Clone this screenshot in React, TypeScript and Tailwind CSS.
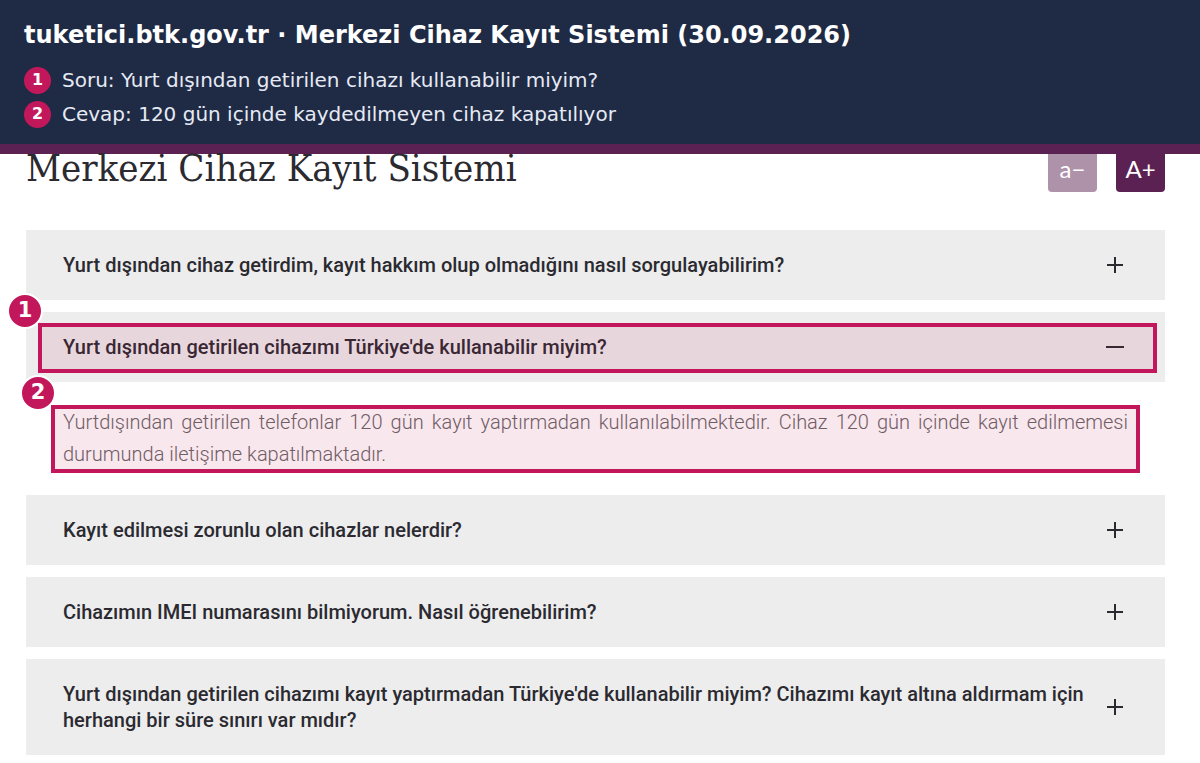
import React, { useState } from "react";

type Faq = {
  question: string;
  answer?: string;
};

const faqs: Faq[] = [
  {
    question:
      "Yurt dışından cihaz getirdim, kayıt hakkım olup olmadığını nasıl sorgulayabilirim?",
  },
  {
    question: "Yurt dışından getirilen cihazımı Türkiye'de kullanabilir miyim?",
    answer:
      "Yurtdışından getirilen telefonlar 120 gün kayıt yaptırmadan kullanılabilmektedir. Cihaz 120 gün içinde kayıt edilmemesi durumunda iletişime kapatılmaktadır.",
  },
  { question: "Kayıt edilmesi zorunlu olan cihazlar nelerdir?" },
  { question: "Cihazımın IMEI numarasını bilmiyorum. Nasıl öğrenebilirim?" },
  {
    question:
      "Yurt dışından getirilen cihazımı kayıt yaptırmadan Türkiye'de kullanabilir miyim? Cihazımı kayıt altına aldırmam için herhangi bir süre sınırı var mıdır?",
  },
];

const notes = [
  "Soru: Yurt dışından getirilen cihazı kullanabilir miyim?",
  "Cevap: 120 gün içinde kaydedilmeyen cihaz kapatılıyor",
];

// Numbered circle that sits on the corner of a highlight frame
const Marker: React.FC<{ label: string }> = ({ label }) => (
  <span className="absolute -left-[35px] -top-[34px] flex size-9 items-center justify-center rounded-full border-2 border-white bg-[#c2185b] font-['DejaVu_Sans'] text-[21px] font-bold text-white">
    {label}
  </span>
);

const ToggleIcon: React.FC<{ open: boolean }> = ({ open }) => (
  <svg
    viewBox="0 0 20 20"
    className="size-5 shrink-0"
    stroke="#2b2a30"
    strokeWidth="2"
    fill="none"
    aria-hidden="true"
  >
    <path d={open ? "M1 10h18" : "M2 10h16M10 2v16"} />
  </svg>
);

const App: React.FC = () => {
  const [openIndex, setOpenIndex] = useState(1);

  return (
    <div className="bg-white font-[Roboto,sans-serif] text-[#2b2a30]">
      {/* Caption */}
      <header className="border-b-10 border-[#5c2153] bg-[#1f2b45] px-6 pt-[19px] pb-4 font-['DejaVu_Sans',sans-serif]">
        <h2 className="text-2xl font-bold text-white">
          tuketici.btk.gov.tr · Merkezi Cihaz Kayıt Sistemi (30.09.2026)
        </h2>
        <ol className="mt-[15px] flex flex-col gap-1.5">
          {notes.map((note, index) => (
            <li key={note} className="flex items-center gap-[11px]">
              <span className="flex size-[27px] shrink-0 items-center justify-center rounded-full bg-[#c2185b] text-base font-bold text-white">
                {index + 1}
              </span>
              <span className="text-xl leading-7 text-[#e6eaf5]">{note}</span>
            </li>
          ))}
        </ol>
      </header>

      <main className="pr-[35px] pl-[26px] pb-2">
        {/* Page title and text size buttons */}
        <div className="flex items-start justify-between">
          <h1 className="font-['DejaVu_Serif_Condensed','DejaVu_Serif',serif] text-[38px] leading-7">
            Merkezi Cihaz Kayıt Sistemi
          </h1>
          <div className="flex gap-[19px] font-[Lato,sans-serif] text-2xl leading-[30px] text-white">
            <button
              type="button"
              className="w-[49px] rounded-b bg-[#ae92a9] pb-2"
              aria-label="Yazıyı küçült"
            >
              a−
            </button>
            <button
              type="button"
              className="w-[49px] rounded-b bg-[#5c2153] pb-2"
              aria-label="Yazıyı büyüt"
            >
              A+
            </button>
          </div>
        </div>

        {/* Questions */}
        <div className="mt-[38px] flex flex-col gap-3">
          {faqs.map((faq, index) => {
            const open = openIndex === index;
            return (
              <section key={faq.question}>
                <div className="relative">
                  <button
                    type="button"
                    aria-expanded={open}
                    onClick={() => setOpenIndex(open ? -1 : index)}
                    className="flex w-full items-center justify-between gap-4 bg-[#ededed] py-[22px] pr-10 pl-[37px] text-left text-xl leading-[26px] font-medium"
                  >
                    <span>{faq.question}</span>
                    <ToggleIcon open={open} />
                  </button>
                  {open && (
                    <div className="pointer-events-none absolute top-[11px] right-2 bottom-[9px] left-3 border-4 border-[#c2185b] bg-[#c2185b]/10">
                      <Marker label="1" />
                    </div>
                  )}
                </div>
                {open && faq.answer && (
                  <div className="px-[37px] pt-6 pb-[13px]">
                    <div className="relative">
                      <p className="text-justify text-xl leading-8 font-light text-[#666666]">
                        {faq.answer}
                      </p>
                      <div className="pointer-events-none absolute -inset-x-3 -top-px -bottom-[3px] border-4 border-[#c2185b] bg-[#c2185b]/10">
                        <Marker label="2" />
                      </div>
                    </div>
                  </div>
                )}
              </section>
            );
          })}
        </div>
      </main>
    </div>
  );
};

export default App;
